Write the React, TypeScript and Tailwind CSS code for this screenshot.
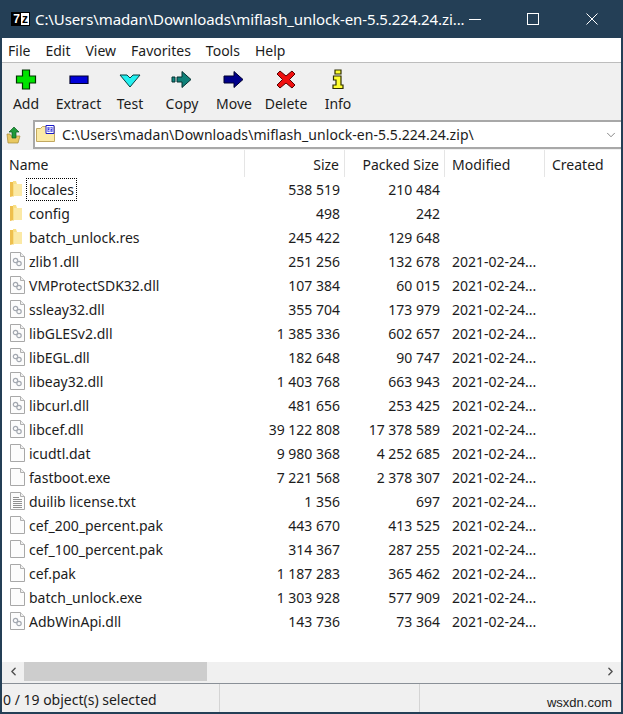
import { ChevronDown, ChevronLeft, ChevronRight } from 'lucide-react';

const font = { fontFamily: '"Noto Sans", "Open Sans", sans-serif' };

type Row = { name: string; size: string; packed: string; modified?: string; kind: 'folder' | 'dll' | 'file' | 'txt' };

const rows: Row[] = [
    { name: 'locales', size: '538 519', packed: '210 484', kind: 'folder' },
    { name: 'config', size: '498', packed: '242', kind: 'folder' },
    { name: 'batch_unlock.res', size: '245 422', packed: '129 648', kind: 'folder' },
    { name: 'zlib1.dll', size: '251 256', packed: '132 678', modified: '2021-02-24...', kind: 'dll' },
    { name: 'VMProtectSDK32.dll', size: '107 384', packed: '60 015', modified: '2021-02-24...', kind: 'dll' },
    { name: 'ssleay32.dll', size: '355 704', packed: '173 979', modified: '2021-02-24...', kind: 'dll' },
    { name: 'libGLESv2.dll', size: '1 385 336', packed: '602 657', modified: '2021-02-24...', kind: 'dll' },
    { name: 'libEGL.dll', size: '182 648', packed: '90 747', modified: '2021-02-24...', kind: 'dll' },
    { name: 'libeay32.dll', size: '1 403 768', packed: '663 943', modified: '2021-02-24...', kind: 'dll' },
    { name: 'libcurl.dll', size: '481 656', packed: '253 425', modified: '2021-02-24...', kind: 'dll' },
    { name: 'libcef.dll', size: '39 122 808', packed: '17 378 589', modified: '2021-02-24...', kind: 'dll' },
    { name: 'icudtl.dat', size: '9 980 368', packed: '4 252 685', modified: '2021-02-24...', kind: 'file' },
    { name: 'fastboot.exe', size: '7 221 568', packed: '2 378 307', modified: '2021-02-24...', kind: 'file' },
    { name: 'duilib license.txt', size: '1 356', packed: '697', modified: '2021-02-24...', kind: 'txt' },
    { name: 'cef_200_percent.pak', size: '443 670', packed: '413 525', modified: '2021-02-24...', kind: 'file' },
    { name: 'cef_100_percent.pak', size: '314 367', packed: '287 255', modified: '2021-02-24...', kind: 'file' },
    { name: 'cef.pak', size: '1 187 283', packed: '365 462', modified: '2021-02-24...', kind: 'file' },
    { name: 'batch_unlock.exe', size: '1 303 928', packed: '577 909', modified: '2021-02-24...', kind: 'file' },
    { name: 'AdbWinApi.dll', size: '143 736', packed: '73 364', modified: '2021-02-24...', kind: 'dll' },
];

function FileIcon({ kind }: { kind: Row['kind'] }) {
    if (kind === 'folder') {
        return (
            <svg width="14" height="18" viewBox="0 0 14 18">
                <path d="M0 2h3l1-1v15l-4 1z" fill="#eebf4e" />
                <path d="M3 1h3l1 3h5v12H4l-1 1z" fill="#f8df85" />
                <path d="M4 4h8v12H4z" fill="#fbe9a6" />
            </svg>
        );
    }
    return (
        <svg width="15" height="18" viewBox="0 0 15 18">
            <path d="M.5.5h10l4 4v13H.5z" fill="#fcfcfc" stroke="#a8a8a8" />
            <path d="M10.500.5v4h4" fill="#f0f0f0" stroke="#b0b0b0" />
            {kind === 'dll' && (
                <g fill="none" stroke="#a3a8b0" strokeWidth="1.2">
                    <circle cx="5.500" cy="8.500" r="2.200" />
                    <circle cx="9" cy="11.500" r="2.200" />
                </g>
            )}
            {kind === 'txt' && <path d="M3 5.500h6M3 7.500h9M3 9.500h9M3 11.500h9M3 13.500h9M3 15.500h9" stroke="#909090" />}
        </svg>
    );
}

const tools = [
    {
        label: 'Add',
        width: 'w-[48px] flex flex-col items-center',
        icon: <path d="M7.500 2h7v6h6v7h-6v6h-7v-6h-6V8h6z" fill="#00e400" stroke="#003300" strokeWidth="1.2" />,
    },
    {
        label: 'Extract',
        width: 'w-[54px] pl-[3px] flex flex-col items-center',
        icon: <path d="M2 8h18v7.500H2z" fill="#0000d8" stroke="#00002f" strokeWidth="1.2" />,
    },
    {
        label: 'Test',
        width: 'w-[52px] flex flex-col items-center',
        icon: <path d="M1 7h7l3 3 3-3h7L11 19z" fill="#22f0f0" stroke="#064040" strokeWidth="1" />,
    },
    {
        label: 'Copy',
        width: 'w-[52px] flex flex-col items-center',
        icon: (
            <g stroke="#053030" strokeWidth="1">
                <path d="M1 9h3v5H1z" fill="#0f8c84" />
                <path d="M6 9h5V3.500l9 8-9 8V14H6z" fill="#0f8078" />
            </g>
        ),
    },
    {
        label: 'Move',
        width: 'w-[52px] flex flex-col items-center',
        icon: <path d="M1 8h10V3.500l9 8-9 8V15H1z" fill="#00008a" stroke="#00002f" strokeWidth="1" />,
    },
    {
        label: 'Delete',
        width: 'w-[52px] flex flex-col items-center',
        icon: <path d="M5 3l6 5 6-5 3 3-5.500 5.500L20 17l-3 3-6-5-6 5-3-3 5.500-5.500L2 6z" fill="#f01010" stroke="#500" strokeWidth="1" />,
    },
    {
        label: 'Info',
        width: 'w-[52px] flex flex-col items-center',
        icon: (
            <g fill="#ffff30" stroke="#2f2f00" strokeWidth="1.2">
                <path d="M8 2h6v4H8z" />
                <path d="M6.500 8h7.500v9h2v3.500H6V17h3v-5H6.500z" />
            </g>
        ),
    },
];

export default function App() {
    return (
        <div className="w-[623px] h-[714px] flex flex-col bg-[#243f56] text-[14px] leading-[20px] text-[#1c1c1c] overflow-hidden" style={font}>
            {/* Title bar */}
            <div className="h-[38px] flex items-center text-white">
                <div className="ml-[11px] w-[19px] h-[14px] bg-white border border-black flex shrink-0 overflow-hidden" style={{ fontFamily: '"Liberation Sans", sans-serif' }}>
                    <span className="w-[9px] bg-black text-white text-[12px] leading-[12px] font-bold text-center">7</span>
                    <span className="flex-1 text-black text-[12px] leading-[12px] font-bold text-center">z</span>
                </div>
                <span className="ml-[5px] text-[15px] whitespace-nowrap tracking-[-0.1px]">C:\Users\madan\Downloads\miflash_unlock-en-5.5.224.24.zi...</span>
                <div className="ml-auto flex items-center">
                    <span className="block w-[12px] h-px bg-white mr-[46px]" />
                    <span className="block w-[12px] h-[12px] border border-white mr-[47px]" />
                    <svg width="12" height="12" viewBox="0 0 12 12" className="mr-[25px]">
                        <path d="M.5.500l11 11M11.500.500l-11 11" stroke="#fff" />
                    </svg>
                </div>
            </div>

            <div className="flex-1 mx-[2px] mb-[2px] flex flex-col bg-white min-h-0">
                {/* Menu */}
                <div className="h-[25px] flex items-center gap-[15px] pl-[6px] pt-px border-b border-[#bdbdbd] shrink-0">
                    {['File', 'Edit', 'View', 'Favorites', 'Tools', 'Help'].map((m) => (
                        <span key={m}>{m}</span>
                    ))}
                </div>

                {/* Toolbar */}
                <div className="h-[57px] flex bg-[#f0f0f0] shrink-0 pt-[5px]">
                    {tools.map((t) => (
                        <div key={t.label} className={t.width}>
                            <svg width="22" height="22" viewBox="0 0 22 22">{t.icon}</svg>
                            <span className="mt-[4px]">{t.label}</span>
                        </div>
                    ))}
                </div>

                {/* Address */}
                <div className="h-[29px] flex bg-[#f0f0f0] shrink-0">
                    <div className="w-[31px] flex items-center pl-[4px]">
                        <svg width="16" height="18" viewBox="0 0 16 18">
                            <path d="M1 8h3l1 2h9l-2 7H2z" fill="#e9c860" stroke="#a58a35" strokeWidth=".7" />
                            <path d="M8 1l5 5h-3v6H6V6H3z" fill="#1f9a3a" stroke="#0c5a20" strokeWidth=".7" />
                        </svg>
                    </div>
                    <div className="flex-1 flex items-center bg-white border-l-2 border-t-2 border-b-2 border-[#a8a8a8] pl-[1px]">
                        <svg width="20" height="19" viewBox="0 0 20 19" className="shrink-0">
                            <path d="M0.500 3.500h4l2-2h12v15h-18z" fill="#fbeaa6" stroke="#c2a860" />
                            <path d="M10 .5h8v8h-8z" fill="#fff" stroke="#1a1ac8" />
                            <path d="M11.500 2h5v5h-5z" fill="#3a3ae0" />
                            <path d="M12.500 3h3l-3 3h3" fill="none" stroke="#fff" />
                        </svg>
                        <span className="ml-[6px] flex-1 whitespace-nowrap tracking-[0.05px]">C:\Users\madan\Downloads\miflash_unlock-en-5.5.224.24.zip\</span>
                        <ChevronDown size={14} strokeWidth={1.2} className="mr-[3px] text-[#555]" />
                    </div>
                </div>

                {/* Header */}
                <div className="h-[28px] flex items-center shrink-0 border-t border-[#f0f0f0]">
                    <div className="w-[243px] h-full pl-[7px] pt-[2px] flex items-center border-r border-[#e5e5e5]">Name</div>
                    <div className="w-[100px] h-full pr-[5px] pt-[2px] flex items-center justify-end border-r border-[#e5e5e5]">Size</div>
                    <div className="w-[100px] h-full pr-[5px] pt-[2px] flex items-center justify-end border-r border-[#e5e5e5]">Packed Size</div>
                    <div className="w-[100px] h-full pl-[7px] pt-[2px] flex items-center border-r border-[#e5e5e5]">Modified</div>
                    <div className="pl-[7px] pt-[2px]">Created</div>
                </div>

                {/* List */}
                <div className="flex-1 min-h-0">
                    {rows.map((r, i) => (
                        <div key={r.name} className="h-[24px] flex items-center">
                            <div className="w-[243px] flex items-center pl-[8px]">
                                <span className="w-[15px] flex justify-start shrink-0"><FileIcon kind={r.kind} /></span>
                                {i === 0 ? (
                                    <span className="ml-[1px] px-[2px] border border-dotted border-black leading-[21px]">{r.name}</span>
                                ) : (
                                    <span className="ml-[4px] pt-[2px] whitespace-nowrap">{r.name}</span>
                                )}
                            </div>
                            <div className="w-[95px] pt-[2px] text-right">{r.size}</div>
                            <div className="w-[100px] pt-[2px] text-right">{r.packed}</div>
                            <div className="ml-[12px] pt-[2px] whitespace-nowrap">{r.modified}</div>
                        </div>
                    ))}
                </div>

                {/* Horizontal scrollbar */}
                <div className="h-[21px] bg-[#f0f0f0] shrink-0">
                    <div className="h-[19px] flex items-center">
                        <div className="w-[22px] flex justify-center"><ChevronLeft size={13} strokeWidth={2.6} className="text-[#505050]" /></div>
                        <div className="w-[183px] h-full bg-[#cdcdcd]" />
                        <div className="ml-auto w-[22px] flex justify-center"><ChevronRight size={13} strokeWidth={2.6} className="text-[#505050]" /></div>
                    </div>
                </div>

                {/* Status */}
                <div className="h-[29px] flex bg-[#f0f0f0] border-t border-[#8a9097] shrink-0">
                    <div className="w-[218px] h-full flex items-center pl-[1px] pt-[3px] border-r border-[#d4d4d4] whitespace-nowrap">0 / 19 object(s) selected</div>
                    <div className="w-[200px] h-full border-r border-[#d4d4d4]" />
                    <div className="flex-1 flex items-end justify-end pr-[9px] pb-[1px] text-[13px] leading-[16px]" style={{ fontFamily: '"Liberation Sans", sans-serif' }}>wsxdn.com</div>
                </div>
            </div>
        </div>
    );
}
